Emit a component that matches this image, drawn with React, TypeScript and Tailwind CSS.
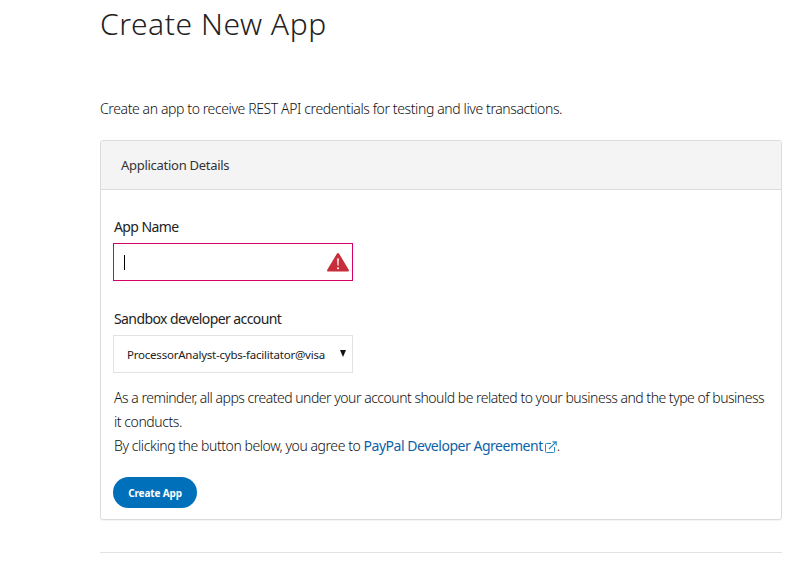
function WarningIcon() {
  return (
    <svg className="h-5 w-6" viewBox="0 0 24 20" aria-hidden="true">
      <path d="M12 2.2 21.7 18.4H2.3Z" fill="#c72e39" stroke="#c72e39" strokeWidth="2.4" strokeLinejoin="round" />
      <path d="M11.2 6.6h1.6l-.4 7h-.8Z" fill="#fff" stroke="#fff" strokeWidth="0.2" />
      <circle cx="12" cy="16.2" r="1" fill="#fff" />
    </svg>
  );
}

function ExternalIcon() {
  return (
    <svg className="ml-0.5 mt-0.5 h-3 w-3 shrink-0" viewBox="0 0 12 12" fill="none" stroke="#2d8abf" aria-hidden="true">
      <path d="M6 2.5H1.5a1 1 0 0 0-1 1v7a1 1 0 0 0 1 1h7a1 1 0 0 0 1-1V6" />
      <path d="M4 8 10.8 1.2M7.5.8h3.7v3.7" strokeWidth="1.2" />
    </svg>
  );
}

export default function App() {
  return (
    <main className="h-[587px] w-[801px] overflow-hidden bg-white pl-[100px] pr-[19px] font-['Noto_Sans',sans-serif] text-sm text-[#222]">
      <h1 className="h-[97px] pt-1 text-[30px] font-light leading-10 tracking-[0.55px]">Create New App</h1>
      <p className="h-[43px] whitespace-nowrap font-light leading-6 tracking-[-0.39px] text-[#111]">
        Create an app to receive REST API credentials for testing and live transactions.
      </p>
      <section className="h-[380px] rounded-[3px] border border-[#dcdcdc] shadow-[0_1px_1px_rgba(0,0,0,0.05)]">
        <h2 className="flex h-[49px] items-center rounded-t-[2px] border-b border-[#dcdcdc] bg-[#f4f4f4] pl-5 pt-px text-[13px] tracking-[-0.28px] text-[#333]">
          Application Details
        </h2>
        <div className="px-[13px]">
          <label className="mt-[25px] block h-[28px] leading-6 tracking-[-0.6px]">App Name</label>
          <div className="-ml-px flex h-[38px] w-60 items-center justify-between border border-[#d6006b] pl-2.5 pr-0.5">
            <div className="h-[15px] w-px bg-black" />
            <WarningIcon />
          </div>
          <label className="mt-[26px] block h-[28px] whitespace-nowrap leading-6 tracking-[-0.59px]">Sandbox developer account</label>
          <div className="-ml-px flex h-[38px] w-60 items-center justify-between border border-[#e2e2e2] pl-[13px] pr-1.5">
            <span className="whitespace-nowrap pt-0.5 text-[11.5px] tracking-[-0.22px]">ProcessorAnalyst-cybs-facilitator@visa</span>
            <svg className="mb-px h-[7px] w-1.5" viewBox="0 0 6 7" aria-hidden="true"><path d="M0 0h6L3 7Z" fill="#111" /></svg>
          </div>
          <div className="mt-[13px] whitespace-nowrap font-light leading-6 tracking-[-0.43px] text-[#111]">
            <p className="tracking-[-0.49px]">As a reminder, all apps created under your account should be related to your business and the type of business</p>
            <p>it conducts.</p>
            <p className="flex items-center">
              <span>By clicking the button below, you agree to&nbsp;</span>
              <a className="font-normal tracking-[-0.47px] text-[#0b62a8]">PayPal Developer Agreement</a>
              <ExternalIcon />.
            </p>
          </div>
          <button className="-ml-px mt-[19px] block h-[31px] w-[84px] rounded-full bg-[#0070ba] pt-0.5 text-[10px] font-bold tracking-[-0.15px] text-white">Create App</button>
        </div>
      </section>
      <hr className="mt-8 border-[#e2e2e2]" />
    </main>
  );
}
